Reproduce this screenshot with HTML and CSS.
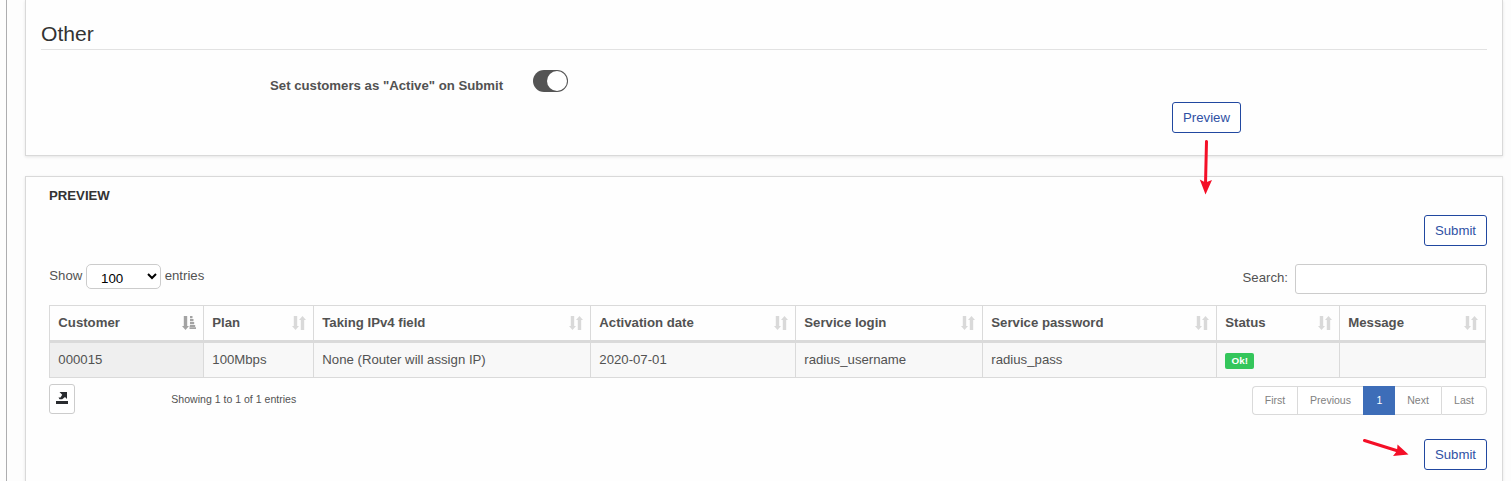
FILE: index.html
```html
<!DOCTYPE html>
<html lang="en">
<head>
<meta charset="utf-8">
<title>Preview</title>
<link rel="stylesheet" href="styles.css">
</head>
<body>
<svg class="defs" width="0" height="0">
  <symbol id="sort" viewBox="0 0 14 14">
    <path d="M1.800 0h3.400v10h1.800l-3.500 4L0 10h1.800zM8.800 14h3.400V4H14l-3.500-4L7 4h1.800z"/>
  </symbol>
  <symbol id="sort-asc" viewBox="0 0 14 14">
    <path d="M1.800 0h3.400v10h1.800l-3.500 4L0 10h1.800zM8 0h2.500v2.200H8zM8 2.900h3.500v2.300H8zM8 5.900h4.200v2.300H8zM8 8.900h5.200v2H7.500zM7.500 11.300H14V13H7.500z"/>
  </symbol>
</svg>
<main class="page">
  <section class="panel panel-other">
    <h2 class="heading">Other</h2>
    <div class="setting">
      <span class="setting-label">Set customers as "Active" on Submit</span>
      <span class="toggle"><span class="knob"></span></span>
    </div>
    <div class="preview-row"><button class="btn btn-preview">Preview</button></div>
  </section>
  <section class="panel panel-preview">
    <h3 class="title">PREVIEW</h3>
    <div class="actions"><button class="btn btn-submit">Submit</button></div>
    <div class="controls">
      <label class="length">Show <select class="select"><option>100</option></select> entries</label>
      <label class="search">Search: <input class="search-input" type="text"></label>
    </div>
    <table class="table">
      <colgroup><col class="c1"><col class="c2"><col class="c3"><col class="c4"><col class="c5"><col class="c6"><col class="c7"><col class="c8"></colgroup>
      <thead>
        <tr>
          <th><div class="th">Customer<svg class="sort sorted"><use href="#sort-asc"/></svg></div></th>
          <th><div class="th">Plan<svg class="sort"><use href="#sort"/></svg></div></th>
          <th><div class="th">Taking IPv4 field<svg class="sort"><use href="#sort"/></svg></div></th>
          <th><div class="th">Activation date<svg class="sort"><use href="#sort"/></svg></div></th>
          <th><div class="th">Service login<svg class="sort"><use href="#sort"/></svg></div></th>
          <th><div class="th">Service password<svg class="sort"><use href="#sort"/></svg></div></th>
          <th><div class="th">Status<svg class="sort"><use href="#sort"/></svg></div></th>
          <th><div class="th">Message<svg class="sort"><use href="#sort"/></svg></div></th>
        </tr>
      </thead>
      <tbody>
        <tr>
          <td class="key">000015</td><td>100Mbps</td><td>None (Router will assign IP)</td><td>2020-07-01</td>
          <td>radius_username</td><td>radius_pass</td><td><span class="badge">Ok!</span></td><td></td>
        </tr>
      </tbody>
    </table>
    <div class="footer">
      <button class="export" aria-label="Export">
        <svg width="12" height="12" viewBox="0 0 12 12"><path d="M3.500 0H11v7L9 5 6.200 7.200H3.500L2.500 5.500h2L6.200 2.700zM0 9h12v3H0z"/></svg>
      </button>
      <span class="info">Showing 1 to 1 of 1 entries</span>
      <nav class="pages">
        <a class="pg first">First</a><a class="pg prev">Previous</a><a class="pg current">1</a><a class="pg next">Next</a><a class="pg last">Last</a>
      </nav>
    </div>
    <div class="actions bottom"><button class="btn btn-submit">Submit</button></div>
  </section>
</main>
<svg class="arrows" width="1511" height="481">
  <path class="shaft" d="M1206.500 141.500L1205.500 184M1364.500 440.500L1398 451"/>
  <path class="head" d="M1205.500 194.500L1199.800 179.500 1205.500 182.500 1212 180zM1408.500 454.500L1393 456 1397 451 1397.500 444.500z"/>
</svg>
</body>
</html>
```
FILE: styles.css
```css
* { box-sizing: border-box; }
body {
  margin: 0;
  height: 481px;
  overflow: hidden;
  background: #fdfdfd;
  color: #525252;
  font: 13.200px/18px "Liberation Sans", Arial, sans-serif;
}
.defs { position: absolute; }
.page {
  height: 481px;
  margin-left: 6px;
  padding: 0 8px 0 18px;
  border-left: 1px solid #adadaf;
  display: flex;
  flex-direction: column;
  gap: 20px;
}
.panel {
  flex: none;
  border: 1px solid #d9d9d9;
  background: #fefefe;
  box-shadow: 0 1px 3px rgba(0, 0, 0, .1);
}
.panel-other { height: 156px; padding: 0 15px; border-top: 0; }
.panel-preview { height: 305px; padding: 10px 15px 0 23px; border-bottom: 0; }
.heading {
  height: 50px;
  margin: 0;
  padding-top: 22px;
  border-bottom: 1px solid #e2e2e2;
  color: #333;
  font-size: 21.120px;
  line-height: 24px;
  font-weight: 400;
}
.setting { display: flex; height: 52px; padding: 20px 0 0 229px; gap: 30px; }
.setting-label { width: 233px; padding-top: 7px; font-weight: 700; line-height: 17px; white-space: nowrap; }
.toggle {
  width: 35px;
  height: 22px;
  padding: 1px;
  border-radius: 11px;
  background: #545454;
  display: flex;
  justify-content: flex-end;
}
.knob { width: 20px; height: 20px; border-radius: 50%; background: #fff; }
.preview-row { display: flex; justify-content: flex-end; padding-right: 246px; }
.btn {
  height: 31px;
  padding: 0;
  border: 1px solid #2148a0;
  border-radius: 3px;
  background: #fff;
  color: #2f51a4;
  font: 13.200px/18px "Liberation Sans", Arial, sans-serif;
}
.btn-preview { width: 69px; }
.btn-submit { width: 63px; }
.title { margin: 0; height: 28px; color: #333; font-size: 13.200px; line-height: 18px; }
.actions { display: flex; justify-content: flex-end; }
.controls { display: flex; justify-content: space-between; height: 59px; padding-top: 18px; }
.length { display: flex; gap: 3.700px; padding-left: .3px; line-height: 23px; }
.select {
  width: 75px;
  height: 25px;
  padding: 4px 0 0 10px;
  border: 1px solid #ccc;
  border-radius: 5px;
  background: #fff;
  color: #000;
  font: 13.333px "Liberation Sans", Arial, sans-serif;
}
.search { display: flex; gap: 7px; line-height: 27px; }
.search-input { width: 192px; height: 30px; border: 1px solid #ccc; border-radius: 3px; background: #fff; }
.table { width: 1437px; table-layout: fixed; border-spacing: 0; }
.c1 { width: 154px; } .c2 { width: 110px; } .c3 { width: 277px; } .c4 { width: 205px; }
.c5 { width: 187px; } .c6 { width: 234px; } .c7 { width: 123px; } .c8 { width: 147px; }
th, td { padding: 0 8px 0 8.300px; border-left: 1px solid #dadada; text-align: left; }
th:last-child, td:last-child { border-right: 1px solid #dadada; }
th { height: 38px; border-top: 1px solid #dadada; border-bottom: 3px solid #dadada; background: #fefefe; }
td { height: 35px; border-bottom: 1px solid #dadada; background: #f8f8f8; }
.key { background: #efefef; }
.th { display: flex; justify-content: space-between; align-items: center; }
.sort { width: 14px; height: 14px; margin: -1px -1px 0 0; fill: #d9d9d9; }
.sorted { fill: #a3a3a3; }
.badge {
  display: block;
  width: 29px;
  height: 16px;
  margin-top: 2px;
  border-radius: 2px;
  background: #34c65b;
  color: #fff;
  font: 700 9.900px/16px "Liberation Sans", sans-serif;
  text-align: center;
}
.footer { display: flex; height: 61px; padding-top: 6px; }
.export {
  width: 26px;
  height: 30px;
  padding: 0 0 3px;
  border: 1px solid #ccc;
  border-radius: 3px;
  background: #fff;
  display: flex;
  align-items: center;
  justify-content: center;
  fill: #292b2f;
}
.info { margin-left: 96.300px; padding-top: 6px; font-size: 10.560px; }
.pages { display: flex; height: 29px; margin: 2px 0 0 auto; color: #818181; font-size: 10.560px; line-height: 27px; text-align: center; }
.pg { border: 1px solid #dadada; border-right: 0; background: #fff; }
.first { width: 45px; border-radius: 4px 0 0 4px; }
.prev { width: 66px; }
.current { width: 32px; border-color: #3d6db8; background: #3d6db8; color: #fff; }
.next { width: 46px; border-left: 0; }
.last { width: 46px; border-right: 1px solid #dadada; border-radius: 0 4px 4px 0; }
.arrows { position: absolute; top: 0; left: 0; pointer-events: none; }
.shaft { fill: none; stroke: #f40f27; stroke-width: 3; stroke-linecap: round; }
.head { fill: #f40f27; }
```
